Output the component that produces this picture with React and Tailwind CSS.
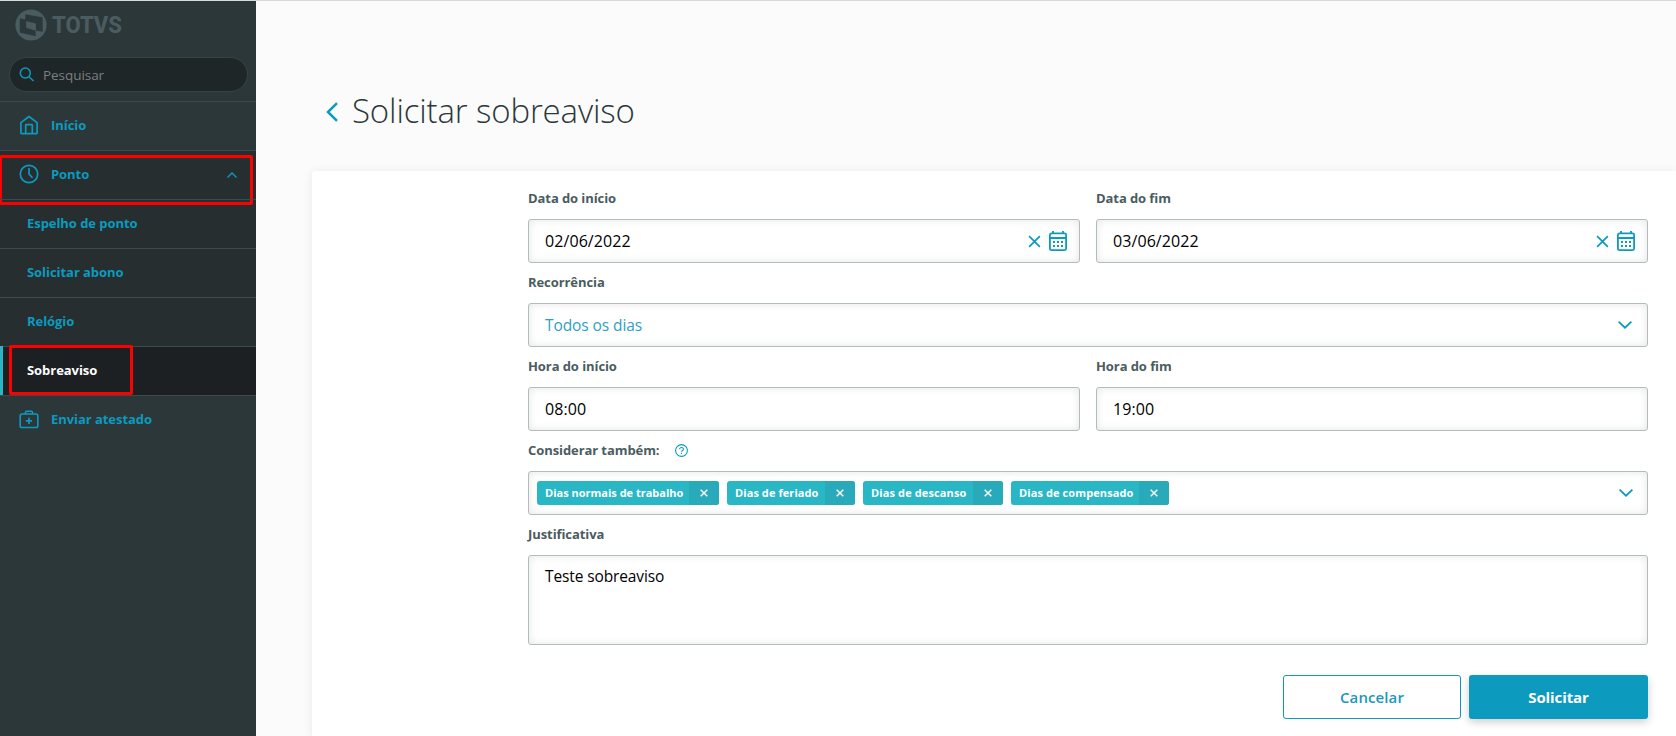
import React, { useState } from 'react';

const SUB_ITEMS = ['Espelho de ponto', 'Solicitar abono', 'Relógio', 'Sobreaviso'];

const TAGS = [
    { label: 'Dias normais de trabalho', width: 'w-[182px]', tracking: 'tracking-[0px]' },
    { label: 'Dias de feriado', width: 'w-[128px]', tracking: 'tracking-[0.08px]' },
    { label: 'Dias de descanso', width: 'w-[140px]', tracking: 'tracking-[0.12px]' },
    { label: 'Dias de compensado', width: 'w-[158px]', tracking: 'tracking-[0.1px]' },
];

const fieldBox =
    'h-11 w-full rounded-[3px] border border-[#b2bcbc] bg-white shadow-[inset_0_0_8px_rgba(0,0,0,0.1)]';

const LogoMark = () => (
    <svg width="32" height="32" viewBox="0 0 32 32" className="shrink-0">
        <circle cx="16" cy="16" r="15.600" fill="#4a5c60" />
        <path
            d="M10.500 5.500 27.500 8.500V22.500L21 21.500V14.500L10.500 11.700ZM5 9.500 11 10.800V19L20.500 21.800V27L5 23.500Z"
            fill="#2c3739"
            stroke="#2c3739"
            strokeWidth="0.300"
            strokeLinejoin="round"
        />
    </svg>
);

const SearchIcon = () => (
    <svg width="16" height="16" viewBox="0 0 16 16" fill="none" stroke="#0c9abe" strokeWidth="1.500">
        <circle cx="6.300" cy="6" r="5" />
        <path d="m10 9.800 4.500 4.200" />
    </svg>
);

const HomeIcon = () => (
    <svg width="20" height="20" viewBox="0 0 20 20" fill="none" stroke="#0c9abe" strokeWidth="1.700" strokeLinejoin="round">
        <path d="M1.900 7.600 10 1.500l8.100 6.100v10.100a1 1 0 0 1-1 1H2.900a1 1 0 0 1-1-1Z" />
        <path d="M6.700 18.500v-8.200a.6.600 0 0 1 .6-.6h5.400a.6.600 0 0 1 .6.600v8.200" />
    </svg>
);

const ClockIcon = () => (
    <svg width="20" height="20" viewBox="0 0 20 20" fill="none" stroke="#0c9abe" strokeWidth="1.700" strokeLinecap="round">
        <circle cx="10" cy="10" r="8.700" />
        <path d="M10 4.500V10l3 3.300" />
    </svg>
);

const KitIcon = () => (
    <svg width="20" height="20" viewBox="0 0 20 20" fill="none" stroke="#0c9abe" strokeWidth="1.600">
        <rect x="1.200" y="5" width="17.600" height="13.500" rx="1.800" />
        <path d="M6.500 5V3.300a1 1 0 0 1 1-1h5a1 1 0 0 1 1 1V5" />
        <path d="M10 8.700v6.200M6.900 11.800h6.200" strokeWidth="1.700" />
    </svg>
);

const CalendarIcon = () => (
    <svg width="20" height="22" viewBox="0 0 20 22" fill="none" stroke="#0c9abe">
        <rect x="1.900" y="3.400" width="16.200" height="16.700" rx="1.500" strokeWidth="1.800" />
        <path d="M2 8h16" strokeWidth="2" />
        <path d="M5 1v3M15 1v3" strokeWidth="1.800" />
        <path d="M5 12h10M5 16h10" strokeWidth="2" strokeDasharray="2 2" />
    </svg>
);

const CloseIcon = ({ size = 13, color = '#0c9abe', stroke = 1.8 }) => (
    <svg width={size} height={size} viewBox="0 0 14 14" fill="none" stroke={color} strokeWidth={stroke}>
        <path d="m1.200 1.200 11.600 11.600M12.800 1.200 1.200 12.800" />
    </svg>
);

const ChevronDown = () => (
    <svg width="14" height="8" viewBox="0 0 14 8" fill="none" stroke="#0c9abe" strokeWidth="1.800">
        <path d="m.6.700 6.400 6L13.400.700" />
    </svg>
);

const HelpIcon = () => (
    <svg width="13" height="13" viewBox="0 0 13 13" fill="none" stroke="#0c9abe" strokeWidth="1.100">
        <circle cx="6.500" cy="6.500" r="5.900" />
        <path d="M4.600 5.200a1.900 1.700 0 1 1 2.700 1.500c-.6.300-.8.500-.8 1.100M6.500 8.800V10" />
    </svg>
);

const Field = ({ label, extra, children }) => (
    <div className="h-[84px] w-full">
        <div className="flex h-10 items-center pb-0.5 text-[13px] leading-5 font-bold tracking-[-0.08px] text-[#4a5c60]">
            {label}
            {extra}
        </div>
        {children}
    </div>
);

const DateField = ({ label, value, onChange }) => (
    <Field label={label}>
        <div className={`${fieldBox} flex items-center pr-[11px] pl-4`}>
            <input
                value={value}
                onChange={(e) => onChange(e.target.value)}
                className="min-w-0 flex-1 bg-transparent pb-px text-[16px] tracking-[0.08px] text-black outline-none"
            />
            <button className="mr-[7px]" onClick={() => onChange('')}>
                <CloseIcon />
            </button>
            <CalendarIcon />
        </div>
    </Field>
);

const Sidebar = () => (
    <aside className="h-full w-64 shrink-0 bg-[#2c3739] text-[13px] font-bold tracking-[-0.05px] text-[#0c9abe]">
        <div className="flex h-14 items-start gap-[5px] pt-2 pl-[15px]">
            <LogoMark />
            <span className="origin-left scale-x-90 font-['Roboto'] text-[24.5px] leading-8 font-extrabold tracking-normal text-[#4a5c60]">
                TOTVS
            </span>
        </div>
        <div className="mr-2 ml-[9px] flex h-[35px] items-center gap-2 rounded-full border border-[#364346] bg-[#1f2628] pl-[9px]">
            <SearchIcon />
            <span className="pt-px text-[13.5px] font-normal tracking-[-0.05px] text-[#7a7f80]">Pesquisar</span>
        </div>
        <nav className="pt-[9px]">
            <a className="flex h-[49px] items-center gap-3 border-t border-[#3c4a4d] pb-[3px] pl-[19px]">
                <HomeIcon />
                <span className="pt-0.5">Início</span>
            </a>
            <div className="bg-[#262e30]">
                <a className="relative flex h-[49px] items-center gap-3 border-t border-[#3c4a4d] pr-[19px] pb-[3px] pl-[19px]">
                    <ClockIcon />
                    <span className="flex-1 pt-0.5">Ponto</span>
                    <svg width="10" height="6" viewBox="0 0 10 6" className="mt-[3px]" fill="none" stroke="#0c9abe" strokeWidth="1.400">
                        <path d="m.5 5.500 4.500-4.500 4.500 4.500" />
                    </svg>
                    <div className="absolute top-1 -left-px h-[50px] w-[254px] rounded-[2px] border-3 border-[#ff0000]" />
                </a>
                {SUB_ITEMS.map((item) => {
                    const active = item === 'Sobreaviso';
                    return (
                        <a
                            key={item}
                            className={`relative flex h-[49px] items-center border-t border-[#3c4a4d] pb-px pl-[27px] ${
                                active ? 'bg-[#1c2022] text-white' : ''
                            }`}
                        >
                            {active && (
                                <>
                                    <div className="absolute -top-px left-0 h-[49px] w-[3px] bg-[#29b6c5]" />
                                    <div className="absolute -top-[2px] left-[9px] h-[50px] w-[124px] rounded-[2px] border-3 border-[#ff0000]" />
                                </>
                            )}
                            <span>{item}</span>
                        </a>
                    );
                })}
            </div>
            <a className="flex h-[49px] items-center gap-3 border-t border-[#3c4a4d] pb-[3px] pl-[19px]">
                <KitIcon />
                <span className="pt-0.5">Enviar atestado</span>
            </a>
        </nav>
    </aside>
);

const App = () => {
    const [start, setStart] = useState('02/06/2022');
    const [end, setEnd] = useState('03/06/2022');

    return (
        <div className="flex h-[736px] w-full overflow-hidden border-t border-[#d9d9d9] bg-[#fbfbfb] font-['Open_Sans',sans-serif]">
            <Sidebar />
            <main className="flex min-w-0 flex-1 flex-col pl-14">
                <header className="flex h-[170px] items-start gap-3.5 pt-[86px] pl-3.5">
                    <svg width="12" height="20" viewBox="0 0 12 20" className="mt-[15px]" fill="none" stroke="#0c9abe" strokeWidth="2.500">
                        <path d="M11 1.200 2 10l9 8.800" />
                    </svg>
                    <h1 className="text-[33px] leading-12 font-light tracking-[-0.14px] text-[#2c3739]">Solicitar sobreaviso</h1>
                </header>
                <section className="flex-1 rounded-tl-[3px] bg-white pt-2 pr-7 pl-[216px] shadow-[0_1px_8px_rgba(60,60,120,0.1)]">
                    <div className="grid grid-cols-2 gap-x-4">
                        <DateField label="Data do início" value={start} onChange={setStart} />
                        <DateField label="Data do fim" value={end} onChange={setEnd} />
                    </div>
                    <Field label="Recorrência">
                        <div className={`${fieldBox} flex items-center justify-between pr-[15px] pl-4`}>
                            <span className="pt-0.5 text-[15.5px] tracking-[-0.08px] text-[#2f9fc4]">Todos os dias</span>
                            <ChevronDown />
                        </div>
                    </Field>
                    <div className="grid grid-cols-2 gap-x-4">
                        <Field label="Hora do início">
                            <input defaultValue="08:00" className={`${fieldBox} px-4 pb-px text-[16px] tracking-[0.1px] text-black`} />
                        </Field>
                        <Field label="Hora do fim">
                            <input defaultValue="19:00" className={`${fieldBox} px-4 pb-px text-[16px] tracking-[0.1px] text-black`} />
                        </Field>
                    </div>
                    <Field label="Considerar também:" extra={<span className="ml-4"><HelpIcon /></span>}>
                        <div className={`${fieldBox} flex items-center gap-2 pr-3.5 pl-2`}>
                            {TAGS.map((tag) => (
                                <div key={tag.label} className={`flex h-6 overflow-hidden rounded-[3px] bg-[#29b6c5] ${tag.width}`}>
                                    <span className={`flex-1 pl-2 text-[11px] leading-6 font-bold whitespace-nowrap text-white ${tag.tracking}`}>
                                        {tag.label}
                                    </span>
                                    <button className="flex w-[30px] items-center justify-center bg-[#28aaba]">
                                        <CloseIcon size={8} color="#ffffff" stroke={2.6} />
                                    </button>
                                </div>
                            ))}
                            <span className="ml-auto">
                                <ChevronDown />
                            </span>
                        </div>
                    </Field>
                    <Field label="Justificativa">
                        <textarea
                            defaultValue="Teste sobreaviso"
                            className="block h-[90px] w-full resize-none rounded-[3px] border border-[#b2bcbc] bg-white px-4 py-2 text-[15.5px] leading-6 tracking-[-0.12px] text-black shadow-[inset_0_0_8px_rgba(0,0,0,0.1)]"
                        />
                    </Field>
                    <div className="flex justify-end gap-2 pt-[76px] text-[15px]">
                        <button className="h-11 w-[178px] rounded-[3px] border border-[#0c9abe] bg-white pt-px font-semibold tracking-[0.1px] text-[#2097be]">
                            Cancelar
                        </button>
                        <button className="h-11 w-[179px] rounded-[3px] bg-[#0c9abe] pt-px font-bold tracking-[-0.1px] text-white shadow-[0_3px_8px_rgba(0,0,0,0.2)]">
                            Solicitar
                        </button>
                    </div>
                </section>
            </main>
        </div>
    );
};

export default App;
